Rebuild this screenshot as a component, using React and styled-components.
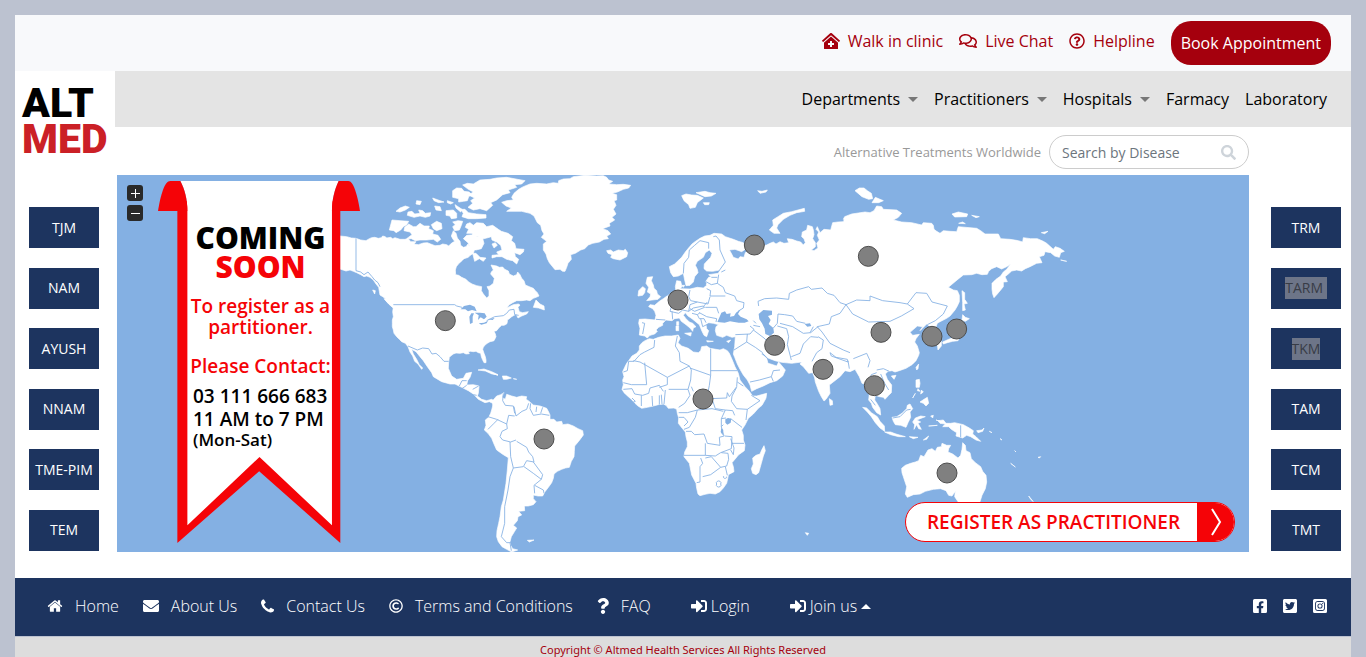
import React from "react";
import styled, { createGlobalStyle } from "styled-components";
import {
  FaClinicMedical,
  FaRegComments,
  FaRegQuestionCircle,
  FaSearch,
  FaEnvelope,
  FaRegCopyright,
  FaQuestion,
  FaSignInAlt,
  FaFacebookSquare,
  FaTwitterSquare,
  FaInstagramSquare,
} from "react-icons/fa";

const NAVY = "#1d345f";
const CRIMSON = "#a5000d";
const RED = "#f50307";
const SEA = "#84b0e3";

const GlobalStyle = createGlobalStyle`
  *, *::before, *::after { box-sizing: border-box; }
  body {
    margin: 0;
    background: #bcc2d0;
    font-family: "Open Sans", "Noto Sans", sans-serif;
    font-size: 16px;
    line-height: 24px;
    color: #000;
  }
  a { color: inherit; text-decoration: none; }
  button, input { font-family: inherit; }
`;

const Page = styled.div`
  margin: 15px 15px 0;
  background: #fff;
`;

const TopBar = styled.div`
  display: flex;
  justify-content: flex-end;
  align-items: center;
  gap: 16px;
  height: 56px;
  padding-right: 20px;
  background: #f8f9fb;
`;

const TopLink = styled.a`
  display: flex;
  align-items: center;
  gap: 8px;
  padding-bottom: 4px;
  color: ${CRIMSON};
  svg { width: ${(p) => p.$icon || 16}px; height: 16px; }
`;

const BookButton = styled.button`
  height: 44px;
  padding: 0 10px;
  border: 0;
  border-radius: 20px;
  background: ${CRIMSON};
  color: #fff;
  font-size: 16px;
`;

const Masthead = styled.header`
  display: grid;
  grid-template-columns: 100px 1fr;
`;

const LogoLink = styled.a`
  display: block;
  padding: 14px 7px 0;
  font-family: Roboto, sans-serif;
  font-weight: 900;
  font-size: 41px;
  line-height: 36px;
`;

const LogoLine = styled.span`
  display: block;
  color: ${(p) => (p.$red ? "#cb2026" : "#000")};
`;

const Nav = styled.nav`
  display: flex;
  justify-content: flex-end;
  align-items: center;
  gap: 16px;
  height: 56px;
  padding-right: 24px;
  background: #e4e4e4;
`;

const NavLink = styled.a`
  display: flex;
  align-items: center;
  gap: 8px;
`;

const Caret = styled.span`
  border: 5px solid transparent;
  border-bottom-width: 0;
  border-top-color: #777;
`;

const CaretUp = styled.span`
  border: 5px solid transparent;
  border-top-width: 0;
  border-bottom-color: #fff;
`;

const SearchRow = styled.form`
  display: flex;
  justify-content: flex-end;
  align-items: center;
  gap: 8px;
  height: 48px;
  padding: 2px 102px 0 0;
`;

const SearchLabel = styled.label`
  color: #999;
  font-size: 13px;
`;

const SearchBox = styled.div`
  display: flex;
  align-items: center;
  width: 200px;
  height: 34px;
  padding: 0 12px;
  border: 1px solid #ccc;
  border-radius: 17px;
  svg { color: #ced4da; flex: none; width: 15px; height: 15px; }
`;

const SearchInput = styled.input`
  flex: 1;
  min-width: 0;
  padding: 0;
  border: 0;
  outline: 0;
  background: none;
  font-size: 14px;
  color: #6c757d;
  &::placeholder { color: #6c757d; opacity: 1; }
`;

const Main = styled.main`
  display: grid;
  grid-template-columns: 102px 1fr 102px;
  margin-bottom: 26px;
`;

const SideColumn = styled.div`
  display: flex;
  flex-direction: column;
  justify-content: space-between;
  align-items: ${(p) => (p.$right ? "flex-end" : "flex-start")};
  padding: ${(p) => (p.$right ? "32px 10px 1px 0" : "32px 0 1px 14px")};
`;

const SideButton = styled.button`
  width: 70px;
  height: 41px;
  padding: 0;
  border: 0;
  background: ${NAVY};
  color: #fff;
  font-size: 14px;
  line-height: 22px;
  white-space: pre;
`;

const Marked = styled.span`
  display: inline-block;
  background: #6d7588;
  color: #383c46;
`;

const MapPanel = styled.section`
  position: relative;
  aspect-ratio: 1132 / 377;
  background: ${SEA};
  overflow: hidden;
`;

const MapSvg = styled.svg`
  display: block;
  width: 100%;
  height: 100%;
`;

const ZoomControls = styled.div`
  position: absolute;
  top: 10px;
  left: 10px;
  display: grid;
  gap: 4px;
`;

const ZoomButton = styled.button`
  width: 16px;
  height: 16px;
  padding: 0;
  border: 0;
  border-radius: 3px;
  background: #292929;
  svg { display: block; }
`;

const Ribbon = styled.aside`
  position: absolute;
  top: 6px;
  left: 41px;
  width: 202px;
  height: 362px;
`;

const RibbonShape = styled.svg`
  position: absolute;
  inset: 0;
  width: 100%;
  height: 100%;
`;

const RibbonText = styled.div`
  position: relative;
  padding: 42px 28px 0 31px;
  color: ${RED};
  font-size: 19px;
  font-weight: 600;
  line-height: 21px;
  text-align: center;
  white-space: nowrap;
`;

const RibbonTitle = styled.h2`
  margin: 0 0 15px;
  font-size: 30px;
  font-weight: 800;
  line-height: 29px;
  span { display: block; color: #000; }
`;

const RibbonNote = styled.p`
  margin: 0 0 18px;
`;

const RibbonContact = styled.p`
  margin: 0 0 8px;
`;

const RibbonHours = styled.p`
  margin: 0;
  padding-left: 4px;
  color: #000;
  font-size: 19px;
  line-height: 23px;
  text-align: left;
  small { display: block; font-size: 17px; line-height: 18px; }
`;

const RegisterLink = styled.a`
  position: absolute;
  right: 14px;
  bottom: 10px;
  display: flex;
  width: 330px;
  height: 40px;
  border: 1px solid ${RED};
  border-radius: 20px;
  overflow: hidden;
  background: #fff;
  color: ${RED};
  font-size: 19px;
  font-weight: 600;
  line-height: 38px;
  white-space: nowrap;
`;

const RegisterText = styled.span`
  flex: 1;
  padding-left: 4px;
  text-align: center;
`;

const RegisterArrow = styled.span`
  display: grid;
  place-items: center;
  width: 37px;
  background: ${RED};
`;

const FooterBar = styled.footer`
  display: flex;
  align-items: center;
  height: 58px;
  padding: 0 23px 2px 32px;
  background: ${NAVY};
  color: #fff;
  font-weight: 300;
`;

const FooterLinks = styled.nav`
  display: flex;
  gap: ${(p) => p.$gap}px;
  margin-right: 40px;
`;

const FooterLink = styled.a`
  display: flex;
  align-items: center;
  gap: ${(p) => (p.$tight ? 4 : 12)}px;
  svg { width: ${(p) => p.$icon || 16}px; height: 16px; }
`;

const Social = styled.div`
  display: flex;
  gap: 14px;
  margin-left: auto;
  svg { display: block; width: 16px; height: 16px; }
`;

const Copyright = styled.div`
  height: 21px;
  padding-top: 5px;
  border-top: 1px solid #bcc2d0;
  background: #ddd;
  color: ${CRIMSON};
  font-family: "Noto Sans", sans-serif;
  font-size: 11px;
  line-height: 15px;
  text-align: center;
`;

function HomeIcon() {
  return (
    <svg viewBox="0 0 1664 1792" fill="currentColor" aria-hidden="true">
      <path d="M1408 992v480q0 26-19 45t-45 19h-384v-384h-256v384h-384q-26 0-45-19t-19-45v-480q0-1 .5-3t.5-3l575-474 575 474q1 2 1 6zm223-69l-62 74q-8 9-21 11h-3q-13 0-21-7l-692-577-692 577q-12 8-24 7-13-2-21-11l-62-74q-8-10-7-23.5t11-21.5l719-599q32-26 76-26t76 26l244 204v-195q0-14 9-23t23-9h192q14 0 23 9t9 23v408l219 182q10 8 11 21.5t-7 23.5z" />
    </svg>
  );
}

function PhoneIcon() {
  return (
    <svg viewBox="0 0 1408 1408" fill="currentColor" aria-hidden="true">
      <path d="M1408 1112q0 27-10 70.5t-21 68.5q-21 50-122 106-94 51-186 51-27 0-53-3.5t-57.5-12.5-47-14.5-55.5-20.5-49-18q-98-35-175-83-127-79-264-216t-216-264q-48-77-83-175-3-9-18-49t-20.5-55.5-14.5-47-12.5-57.5-3.5-53q0-92 51-186 56-101 106-122 25-11 68.5-21t70.5-10q14 0 21 3 18 6 53 76 11 19 30 54t35 63.5 31 53.5q3 4 17.5 25t21.5 35.5 7 28.5q0 20-28.5 50t-62 55-62 53-28.5 46q0 9 5 22.5t8.5 20.5 14 24 11.5 19q76 137 174 235t235 174q2 1 19 11.5t24 14 20.5 8.5 22.5 5q18 0 46-28.5t53-62 55-62 50-28.5q14 0 28.5 7t35.5 21.5 25 17.5q25 15 53.5 31t63.5 35 54 30q70 35 76 53 3 7 3 21z" />
    </svg>
  );
}

/* Each sheet of the map has its own origin inside the 3396 x 1131 view box. */
const SHEETS = [
  {
    id: "north-america",
    x: 669,
    y: -15,
    land: [
      "M-20 196L0 198 20 200 34 204 48 205 62 210 78 212 88 206 95 203 104 202 115 205 124 203 128 198 136 200 140 204 152 202 158 206 165 203 180 208 194 208 205 206 212 215 228 215 222 222 235 224 250 219 262 218 272 222 285 227 300 226 308 222 320 224 326 228 334 220 344 214 338 206 334 198 340 182 348 190 352 204 360 214 362 226 370 232 378 230 384 222 390 232 398 234 404 238 400 250 388 258 385 262 372 266 366 272 355 282 349 290 346 300 347 314 356 316 365 322 378 328 385 335 396 342 410 347 425 350 424 362 430 372 440 384 447 378 447 362 441 350 450 348 460 340 463 325 452 312 454 306 460 300 453 285 470 288 478 292 488 291 494 298 505 303 508 312 520 318 530 314 533 306 540 314 545 325 552 332 556 345 570 351 580 355 586 362 592 368 597 378 588 382 580 385 570 392 560 390 545 392 530 392 518 398 508 404 500 414 508 410 520 404 535 402 540 405 534 412 538 425 548 428 565 425 560 432 545 438 534 444 530 436 530 432 522 436 515 440 508 446 502 450 502 456 500 462 492 466 485 466 476 474 470 482 462 484 466 492 468 500 462 512 456 514 450 515 442 520 435 525 430 532 428 538 432 550 436 560 438 570 438 578 432 578 427 568 424 560 422 550 415 548 408 544 400 545 392 544 385 545 388 551 378 552 370 548 360 550 348 549 340 552 332 558 328 562 326 576 325 595 335 618 350 628 370 625 378 610 395 607 390 622 383 632 380 645 400 644 417 648 415 670 412 678 425 688 440 692 455 688 462 692 458 700 448 695 435 698 415 688 400 672 385 662 365 652 345 642 330 642 305 635 280 620 275 608 262 590 250 572 240 560 228 545 215 538 220 552 230 568 238 584 248 594 245 598 234 582 224 574 218 558 210 546 204 530 196 520 185 515 178 508 170 500 162 490 160 480 157 470 157 460 157 450 160 440 158 425 160 412 152 406 145 400 138 393 135 385 128 380 120 375 118 364 116 352 108 342 100 330 90 322 80 318 72 320 62 314 50 308 40 304 30 300 18 303 0 297 -20 294Z",
      "M485 97L500 92 520 90 515 82 522 70 536 58 550 50 570 42 590 40 620 42 640 38 655 40 656 32 670 27 690 26 700 20 735 16 770 18 790 17 800 22 806 30 818 34 806 42 830 44 850 43 872 46 866 54 850 58 832 66 816 70 830 74 830 90 822 92 828 106 820 118 828 132 816 142 824 150 808 160 810 168 788 176 804 182 812 192 800 198 805 206 792 208 778 216 758 220 745 225 734 236 722 240 706 250 692 254 694 268 684 280 680 292 675 304 668 304 660 298 645 299 636 288 628 278 622 266 618 252 610 240 610 222 620 214 604 202 612 192 606 182 602 166 592 158 582 138 570 130 545 124 500 124 514 114 498 108Z",
      "M800 242L812 240 820 246 835 240 850 242 856 238 863 248 860 260 840 270 820 266 812 262 816 254 804 250Z",
      "M368 45L382 40 400 42 420 30 450 28 470 24 500 22 555 32 545 42 524 44 530 52 505 60 510 68 488 74 470 90 452 98 458 106 440 122 420 116 400 120 384 112 398 100 392 92 404 84 385 75 400 66 385 58Z",
      "M338 62L350 54 365 55 372 64 388 66 394 74 386 80 382 92 370 94 356 96 356 86 338 82Z",
      "M362 118L375 118 385 128 410 132 438 134 438 144 410 146 385 146 366 140 370 130Z",
      "M380 162L390 158 400 166 410 158 430 160 440 170 458 166 475 178 484 184 504 190 518 200 514 212 524 220 528 236 552 238 550 246 540 254 524 248 526 260 536 268 530 282 518 272 500 268 486 260 470 260 456 264 456 256 476 254 470 246 486 240 482 226 470 216 456 210 454 200 440 204 424 208 412 198 400 200 396 190 380 190 386 178 376 172Z",
      "M192 182L194 172 206 162 220 170 228 170 240 160 252 168 268 168 266 176 280 182 278 192 294 196 302 208 292 216 280 208 260 210 240 210 226 212 214 206 200 206 216 194 210 186Z",
      "M156 150L180 152 206 154 200 164 190 170 182 180 168 188 162 182 148 180Z",
      "M202 136L204 126 216 124 224 132 240 130 236 120 248 122 256 130 272 128 270 138 256 142 240 138 222 142Z",
      "M168 124L180 114 196 108 208 112 196 120 180 126Z",
      "M274 164L290 154 304 160 306 176 290 182 280 176Z",
      "M338 156L354 152 368 154 364 166 358 180 344 182 338 170 346 164Z",
      "M318 122L340 120 350 130 350 144 334 146 330 138 318 136Z",
      "M278 84L300 92 312 96 296 98 282 92Z",
      "M322 92L340 98 332 102 322 98Z",
      "M230 92L244 94 240 104 228 102Z",
      "M284 108L300 110 304 122 288 120Z",
      "M345 104L366 118 362 126 348 114Z",
      "M398 250L408 250 420 262 438 264 430 274 418 266 404 274Z",
      "M380 196L400 194 428 206 432 220 424 236 408 240 392 236 384 218 370 206Z",
      "M456 222L466 218 472 226 462 234Z",
      "M580 412L588 390 600 402 612 408 613 420 596 414Z",
      "M98 360L106 362 104 372Z",
      "M132 386L150 394 166 410 162 416 146 402Z",
      "M414 600L432 597 455 605 474 614 456 612 436 603Z",
      "M487 618L500 618 514 624 500 628 490 628Z",
    ],
    water: [
      "M362 418L372 408 390 404 404 410 410 424 396 420 384 424 376 418Z",
      "M388 440L394 430 402 430 398 440 398 458 390 462Z",
      "M404 428L420 428 434 430 440 440 432 448 422 442 414 450 416 436Z",
      "M416 460L432 458 444 452 440 460 424 464Z",
      "M442 448L464 444 458 450Z",
    ],
    lines: [
      "M48 205V302L62 306 72 314 84 306 96 320 104 330 114 338 120 350",
      "M160 404H344L350 408 366 412",
      "M440 452L452 446 464 440 490 437 500 430 508 420 522 418 524 434 536 436",
      "M204 528L232 540 248 534 266 536 276 552 288 550 300 560 312 574 326 574",
    ],
  },
  {
    id: "south-america",
    x: 669,
    y: 555,
    land: [
      "M458 122L470 108 482 104 492 98 486 112 496 118 500 103 515 108 530 112 545 108 560 110 558 118 565 122 572 128 580 135 600 138 620 145 626 156 630 165 630 178 642 178 650 186 665 184 668 194 684 192 700 198 714 206 728 212 730 225 722 236 715 245 704 258 703 275 702 290 694 304 688 322 676 324 665 328 652 334 642 342 640 355 635 368 628 378 615 395 608 408 594 408 580 405 580 416 588 425 580 434 565 438 553 438 554 452 536 454 545 465 534 470 532 482 520 496 530 504 524 514 514 530 510 545 512 556 518 566 533 570 515 576 500 568 486 560 475 545 470 530 471 512 476 490 480 470 484 440 490 420 498 370 502 330 505 293 490 284 470 270 462 252 455 235 444 220 433 210 438 196 436 180 446 172 452 160 455 150 458 138Z",
      "M562 541L582 540 568 546Z",
      "M450 37L462 42 474 46Z",
      "M520 56L530 58Z",
    ],
    lines: [
      "M490 100L488 122 496 136 520 138 524 160",
      "M522 140L528 168 546 154 560 148 566 130",
      "M572 130L570 146 580 166 604 162 628 166",
      "M590 140L588 156M608 142L602 160",
      "M444 170L470 178 500 192 506 166 524 168",
      "M444 208L462 190 474 178",
      "M500 192L502 206 486 214 480 230 488 240 512 246 528 240",
      "M510 246L512 290 520 324 550 320 560 302 582 306 578 290 566 276 560 262 530 244",
      "M552 320L580 340 604 358 608 344 580 306",
      "M604 358L582 376 584 400M584 376L610 390 612 400",
      "M520 324L510 350 504 390 494 440 494 490 484 530 500 548 516 548",
      "M510 548L514 572",
      "M358 78L366 62H380M380 76L366 86M398 88L416 78M410 106L400 104",
    ],
  },
  {
    id: "eurasia",
    x: 1479,
    y: -15,
    land: [
      "M270 205L284 198 300 196 312 190 335 192 346 200 370 208 385 214 400 218 410 235 395 245 375 238 358 240 364 250 370 262 385 267 390 260 402 262 406 248 430 232 470 225 480 220 490 216 498 222 510 215 522 220 536 218 532 206 546 208 560 213 572 216 580 225 586 218 582 206 575 200 577 186 590 180 593 166 607 170 610 180 612 194 608 206 616 218 616 230 604 240 612 242 624 234 620 220 628 210 622 196 626 186 618 178 622 170 630 188 642 178 662 180 668 158 684 156 700 155 706 142 720 138 716 148 700 148 704 140 725 132 765 126 780 128 792 122 800 108 815 110 820 118 860 120 875 130 865 142 850 150 875 156 905 158 935 165 940 158 965 160 970 166 972 178 980 184 990 190 1000 182 1020 184 1040 185 1045 170 1100 175 1112 182 1125 192 1165 192 1172 206 1200 208 1225 212 1238 216 1240 203 1262 206 1282 206 1300 214 1310 220 1330 238 1336 230 1350 235 1363 244 1352 248 1348 262 1334 258 1322 248 1305 245 1302 256 1288 260 1296 278 1280 280 1260 290 1246 296 1235 303 1220 300 1205 303 1195 312 1185 320 1192 335 1180 336 1180 350 1172 360 1162 372 1152 383 1148 372 1146 358 1146 340 1158 328 1172 318 1180 306 1190 298 1202 282 1190 290 1175 297 1160 290 1145 296 1136 304 1132 313 1116 314 1100 310 1085 314 1060 315 1046 326 1035 335 1015 352 1030 360 1042 362 1048 376 1048 395 1042 408 1035 420 1020 438 1010 445 990 455 982 460 976 475 992 500 985 512 970 515 960 495 960 470 950 462 930 482 938 470 922 468 900 487 908 496 928 493 918 506 914 516 922 528 928 548 926 556 918 572 906 584 888 595 868 602 855 606 846 602 834 604 826 612 832 628 845 645 844 668 836 676 825 688 820 682 808 680 796 676 794 690 802 702 810 716 812 735 800 728 788 712 784 700 776 690 778 672 766 642 756 640 748 620 735 598 720 605 705 602 690 620 658 645 660 670 648 688 642 693 634 680 626 664 616 636 614 624 608 608 596 610 580 590 570 582 575 576 545 580 515 577 495 572 474 564 458 548 454 552 470 565 474 580 482 582 500 588 506 576 516 588 526 600 518 618 500 632 480 638 460 648 440 656 425 664 420 645 412 630 400 615 390 598 382 582 374 562 370 552 374 530 376 500 366 502 350 496 338 502 320 496 316 482 318 470 326 464 310 460 296 458 288 464 290 476 296 482 290 500 282 496 276 484 272 474 268 464 258 456 246 446 234 438 226 428 220 436 228 446 238 456 248 460 258 470 250 474 248 484 240 474 228 464 214 454 208 444 194 446 186 452 168 450 158 460 158 466 146 472 138 480 142 484 134 492 120 496 112 504 104 498 88 495 90 475 86 460 88 448 105 447 135 450 138 436 134 424 128 416 116 410 120 404 134 406 148 394 160 386 174 376 192 368 198 364 196 350 200 332 212 334 216 350 210 356 240 357 262 352 280 354 290 346 286 336 296 322 304 320 296 314 325 310 330 300 308 304 290 303 282 296 283 282 292 272 302 262 306 250 298 240 286 248 280 262 262 274 256 286 262 298 264 308 254 320 250 336 240 346 228 347 224 330 220 310 205 318 190 320 182 308 178 290 194 282 215 262 226 246 235 235 246 222 255 215Z",
      "M112 322L128 320 124 332 130 345 132 355 140 362 142 372 152 380 144 388 126 390 110 392 120 380 122 372 112 366 116 352 108 340Z",
      "M86 362L98 350 106 356 104 368 98 376 84 378Z",
      "M215 77L228 72 245 75 262 76 280 84 262 98 256 112 240 115 236 104 222 92Z",
      "M258 68L285 64 300 68 318 70 304 78 285 80Z",
      "M280 98L298 98 296 104 284 104Z",
      "M478 180L490 166 488 150 504 140 520 130 545 125 583 115 584 124 560 128 540 136 520 148 504 164 500 174 510 190 492 190Z",
      "M443 62L456 64 472 60 468 66 450 70Z",
      "M200 455H206V466H200ZM198 468H206V482H198ZM224 490L244 488 242 498ZM290 512L310 514 292 516ZM350 514L362 510 356 518Z",
      "M216 346L224 346 220 352Z",
      "M735 62L748 54 762 54 772 62 784 70 788 86 776 88 756 80Z",
      "M786 98L796 82 820 92 806 98Z",
      "M1026 132L1045 126 1073 132 1070 140 1034 141Z",
      "M1085 136L1108 140 1098 143ZM1046 160L1058 156 1066 161ZM1294 188L1314 184 1304 191ZM1352 270L1370 274Z",
      "M1056 362L1064 368 1064 388 1072 400 1062 402 1066 420 1058 422 1058 398Z",
      "M1058 434L1066 442 1078 446 1066 454 1056 450Z",
      "M1060 454L1062 480 1044 512 1028 514 1012 518 1000 522 998 516 1016 508 1036 500 1044 484Z",
      "M982 522L994 514 994 528 984 540Z",
    ],
    water: [
      "M322 456L330 438 334 428 345 424 350 432 362 430 360 440 372 438 378 428 392 418 384 432 392 440 410 448 416 454 404 458 386 458 360 454 344 458Z",
      "M446 432L460 420 486 422 486 434 474 438 482 450 476 462 490 474 492 488 480 498 466 492 464 476 456 460 448 448Z",
      "M584 462L600 460 604 468 592 470Z",
      "M278 352L290 340 284 334 274 346Z",
    ],
    lines: [
      "M220 310L222 280 236 262 238 240 254 226 270 212 296 218 296 236",
      "M310 200L318 198 328 210 330 240 346 276 326 304",
      "M326 314L322 340 340 352 346 368 374 378 380 392 402 398 400 414 384 424",
      "M286 334L304 344 322 340M290 356L302 362 300 378 346 378",
      "M240 360L236 380 242 392 262 396 294 402 300 380",
      "M174 376L186 404 180 424 206 430 218 420 236 424 240 404 262 396",
      "M236 424L250 414 280 408 284 412 254 424 240 416M280 410L292 396M286 412L320 412 326 430",
      "M246 430L262 434 268 446 282 446 288 458M268 428L290 440 320 446 318 456M262 434L270 428M272 446L278 470 294 462",
      "M138 448L166 450M96 458L104 460 98 492M186 404L176 396M186 424L188 448",
      "M446 408L444 394 464 386 500 384 536 388 538 370 560 360 596 350 604 358 636 354 652 370 672 376 690 398 708 404",
      "M708 404L690 430 664 440 658 462 622 470 636 486 660 520 700 540 720 548",
      "M490 474L502 460 504 432 524 434 548 438 560 454 586 460",
      "M510 460L548 470 580 490 602 488 624 470M502 468L530 476 536 500 532 524 544 570",
      "M544 560L570 550 580 522 602 500 624 502M600 488L610 470M606 574L620 548 636 536 640 510 624 500",
      "M708 404L740 390 780 392 780 378 818 392 870 398 892 402 918 368 950 370 966 396 1012 408 1000 432 976 452 952 464",
      "M708 404L728 432 776 456 840 454 874 438 912 416 892 402",
      "M376 494L420 492 432 478 420 468M412 492L410 516 372 540M410 516L436 532 458 548M430 480L462 504 474 516M430 466L450 470",
      "M420 636L448 630 484 620 490 602 510 600M484 620L490 634",
      "M660 548L678 562 712 568 714 576 664 558Z",
      "M714 572L718 596M730 566L770 550 780 572 774 592M800 608L784 614 776 640M800 600L820 596 838 604M812 612L824 640 836 660",
      "M346 300L334 306M430 452L438 460M304 322L322 322",
    ],
  },
  {
    id: "africa",
    x: 1479,
    y: 465,
    land: [
      "M105 32L118 26 130 28 146 22 165 18 185 18 205 15 210 25 204 38 215 48 235 55 250 66 265 68 272 62 275 50 290 48 300 55 330 60 340 56 352 62 358 70 366 88 375 110 385 130 390 150 405 170 418 184 428 198 440 198 470 190 468 204 465 210 456 226 445 235 430 252 415 265 405 285 395 300 400 316 400 330 405 345 403 362 385 375 378 384 366 398 370 410 372 425 355 434 354 442 350 460 340 474 330 485 316 492 300 490 285 493 270 497 264 492 260 475 258 460 245 435 242 420 238 400 230 390 222 380 224 366 232 350 232 336 228 320 226 306 216 294 205 280 206 264 202 250 200 238 192 234 175 235 168 226 160 222 145 224 130 228 112 232 95 235 84 228 75 220 64 208 55 200 42 188 36 178 40 164 38 150 42 140 38 125 44 112 50 100 56 92 66 78 80 70 88 60 88 48 96 38Z",
      "M462 347L466 362 460 378 454 400 446 428 438 434 428 430 424 416 430 402 428 384 438 376 450 372 456 358Z",
    ],
    water: ["M346 268L354 264 364 266 362 278 352 284 346 278Z", "M334 294L340 300 338 316 332 306Z"],
    lines: [
      "M134 30L132 52 104 66 90 74 72 94 56 94 52 122 40 126",
      "M70 92L90 96 172 142 238 108 210 94 208 68 196 48 202 18",
      "M104 98L110 164 64 164 40 158M172 142L172 164 148 172",
      "M238 108L244 120 242 150 234 178 176 178M240 114L302 136V56M302 122H382",
      "M302 136L298 166 294 186 300 206 350 204 352 188 358 200 380 170 382 142",
      "M382 156L400 168M380 172L366 198 364 214 380 236 412 238 450 212 424 196",
      "M412 238L408 270M346 240L368 242 374 256",
      "M40 178L66 176 74 192 98 196 116 190 120 174 148 166 160 184",
      "M66 204L76 214 62 220M94 196L94 228M126 198L128 228M148 196L148 224M154 194L156 222M166 180L162 222",
      "M234 178L240 196 224 220 206 232M244 170L250 184M206 248H232L262 240 306 236 340 244",
      "M262 240L256 262 238 292 222 298M206 262L222 262 234 276 222 288",
      "M306 206L316 236 346 240 334 266 334 290 342 318 328 322 330 346 292 340 282 312 254 314 244 304 228 304",
      "M286 340V376L222 376M286 376L316 378 332 368 364 356 366 320 344 318",
      "M366 340L402 340M362 326L372 354 370 374 362 360",
      "M272 384L278 400 270 410 270 456 260 458M278 440L302 434 332 412 304 380 286 384",
      "M332 412L350 408 356 388 354 370 334 368M346 410L352 436M320 462A7 6 0 1 0 332 462 7 6 0 1 0 320 462",
      "M342 438A5 4 0 1 0 350 440",
      "M334 266L348 264M362 266L396 292M340 284L334 290",
    ],
  },
  {
    id: "oceania",
    x: 2049,
    y: 465,
    land: [
      "M188 232L200 234 214 248 232 260 240 274 253 288 254 304 240 294 226 278 214 260 202 246Z",
      "M254 306L272 306 288 312 316 320 296 320 272 314Z",
      "M276 262L290 260 306 250 320 236 322 226 330 222 338 236 330 246 332 262 324 278 318 292 302 286 286 284 280 274Z",
      "M342 298L344 284 338 276 346 264 362 258 376 260 360 266 350 270 362 276 354 280 364 298 356 296 350 284Z",
      "M414 272L430 270 438 280 452 280 464 278 490 284 508 294 520 302 518 312 528 320 542 334 528 330 512 320 500 316 488 324 468 318 470 308 454 298 446 290 428 290 436 282 420 280Z",
      "M530 302L546 300 552 294 548 304 534 308Z",
      "M348 150L358 148 360 160 358 172 348 172Z",
      "M360 216L372 208 382 202 386 220 378 228 370 220ZM364 180L370 186 362 192ZM346 190L338 204ZM354 176L360 184 352 182Z",
      "M348 112L356 102 354 116 350 120ZM274 138L288 136 282 148Z",
      "M88 206L97 212 98 224 90 226Z",
      "M305 415L316 406 332 400 346 396 356 392 362 376 372 380 384 360 396 356 406 364 412 352 424 350 426 340 440 346 452 346 446 356 444 366 458 372 474 384 482 376 486 358 488 338 496 346 498 362 510 368 514 386 526 398 542 410 548 424 558 436 560 456 556 476 546 496 540 515 530 540 480 540 474 515 464 500 466 484 456 498 446 496 438 482 422 476 400 478 376 484 360 492 340 494 322 502 316 492 320 470 310 440 306 428Z",
      "M392 258L400 256 398 264ZM328 320L354 322 340 326ZM370 330L386 318 380 328ZM386 288L412 286ZM408 270L420 274Z",
      "M568 304L576 308ZM632 400L646 411ZM714 382L722 380 718 384ZM644 362L648 366ZM600 326L606 330ZM686 498L700 515 692 508ZM16 608L26 610 22 616Z",
    ],
    lines: ["M482 286V322", "M278 264L300 260 320 240 332 238", "M212 208L226 226"],
  },
];

/* Clinic markers, in whole-map coordinates. */
const MARKERS = [
  [985, 437], [1281, 792], [1683, 375], [1758, 672], [1912, 210], [1973, 511], [2118, 583],
  [2254, 244], [2292, 472], [2272, 632], [2445, 484], [2519, 462], [2490, 894],
];

function WorldMap() {
  return (
    <MapSvg viewBox="0 0 3396 1131" preserveAspectRatio="xMidYMid slice" role="img" aria-label="World map">
      {SHEETS.map((s) => (
        <g key={s.id} transform={`translate(${s.x} ${s.y})`}>
          <path d={s.land.join("")} fill="#fff" stroke="#fff" strokeWidth="2" strokeLinejoin="round" />
          {s.water && <path d={s.water.join("")} fill={SEA} />}
          <path d={s.lines.join("")} fill="none" stroke={SEA} strokeWidth="2.6" strokeLinejoin="round" />
        </g>
      ))}
      {MARKERS.map(([x, y]) => (
        <circle key={`${x}-${y}`} cx={x} cy={y} r="30" fill="#808080" stroke="#4d4d4d" strokeWidth="3" />
      ))}
    </MapSvg>
  );
}

function ComingSoon() {
  return (
    <Ribbon>
      <RibbonShape viewBox="0 0 605 1085" preserveAspectRatio="none" aria-hidden="true">
        <path d="M58 60V1085L303 870L546 1085V60Z" fill={RED} />
        <path d="M67 0C80 25 88 55 88 90V1032L304 827L521 1032V90C521 55 530 25 541 0Z" fill="#fff" />
        <path d="M0 90C8 40 20 0 37 0H67C80 25 88 55 88 90Z" fill={RED} />
        <path d="M605 90C597 40 585 0 570 0H541C529 25 521 55 521 90Z" fill={RED} />
      </RibbonShape>
      <RibbonText>
        <RibbonTitle><span>COMING</span>SOON</RibbonTitle>
        <RibbonNote>To register as a<br />partitioner.</RibbonNote>
        <RibbonContact>Please Contact:</RibbonContact>
        <RibbonHours>03 111 666 683<br />11 AM to 7 PM<small>(Mon-Sat)</small></RibbonHours>
      </RibbonText>
    </Ribbon>
  );
}

const LEFT = ["TJM", "NAM", "AYUSH", "NNAM", "TME-PIM", "TEM"];
const RIGHT = ["TRM", "TARM ", "TKM", "TAM", "TCM", "TMT"];
const SELECTED = ["TARM ", "TKM"];

const MENU = [
  ["Departments", true],
  ["Practitioners", true],
  ["Hospitals", true],
  ["Farmacy", false],
  ["Laboratory", false],
];

export default function App() {
  return (
    <>
      <GlobalStyle />
      <Page>
        <TopBar>
          <TopLink href="#clinic" $icon={18}><FaClinicMedical />Walk in clinic</TopLink>
          <TopLink href="#chat" $icon={18}><FaRegComments />Live Chat</TopLink>
          <TopLink href="#help"><FaRegQuestionCircle />Helpline</TopLink>
          <BookButton type="button">Book Appointment</BookButton>
        </TopBar>
        <Masthead>
          <LogoLink href="#top">
            <LogoLine>ALT</LogoLine>
            <LogoLine $red>MED</LogoLine>
          </LogoLink>
          <div>
            <Nav>
              {MENU.map(([label, drop]) => (
                <NavLink key={label} href={`#${label}`}>{label}{drop && <Caret />}</NavLink>
              ))}
            </Nav>
            <SearchRow>
              <SearchLabel htmlFor="disease">Alternative Treatments Worldwide</SearchLabel>
              <SearchBox>
                <SearchInput id="disease" type="text" placeholder="Search by Disease" />
                <FaSearch />
              </SearchBox>
            </SearchRow>
          </div>
        </Masthead>
        <Main>
          <SideColumn>
            {LEFT.map((t) => <SideButton type="button" key={t}>{t}</SideButton>)}
          </SideColumn>
          <MapPanel>
            <WorldMap />
            <ZoomControls>
              <ZoomButton type="button" aria-label="Zoom in">
                <svg width="16" height="16"><path d="M4 8.5H13M8.5 4V13" stroke="#fff" /></svg>
              </ZoomButton>
              <ZoomButton type="button" aria-label="Zoom out">
                <svg width="16" height="16"><path d="M4 8.5H13" stroke="#fff" /></svg>
              </ZoomButton>
            </ZoomControls>
            <ComingSoon />
            <RegisterLink href="#register">
              <RegisterText>REGISTER AS PRACTITIONER</RegisterText>
              <RegisterArrow>
                <svg width="12" height="30" viewBox="0 0 12 30"><path d="M2 2L10 15L2 28" fill="none" stroke="#fff" strokeWidth="2" /></svg>
              </RegisterArrow>
            </RegisterLink>
          </MapPanel>
          <SideColumn $right>
            {RIGHT.map((t) => (
              <SideButton type="button" key={t}>{SELECTED.includes(t) ? <Marked>{t}</Marked> : t}</SideButton>
            ))}
          </SideColumn>
        </Main>
        <FooterBar>
          <FooterLinks $gap={24}>
            <FooterLink href="#home"><HomeIcon />Home</FooterLink>
            <FooterLink href="#about"><FaEnvelope />About Us</FooterLink>
            <FooterLink href="#contact" $icon={13}><PhoneIcon />Contact Us</FooterLink>
            <FooterLink href="#terms" $icon={14}><FaRegCopyright />Terms and Conditions</FooterLink>
            <FooterLink href="#faq" $icon={12}><FaQuestion />FAQ</FooterLink>
          </FooterLinks>
          <FooterLinks $gap={40}>
            <FooterLink href="#login" $tight><FaSignInAlt />Login</FooterLink>
            <FooterLink href="#join" $tight><FaSignInAlt />Join us<CaretUp /></FooterLink>
          </FooterLinks>
          <Social>
            <a href="#facebook" aria-label="Facebook"><FaFacebookSquare /></a>
            <a href="#twitter" aria-label="Twitter"><FaTwitterSquare /></a>
            <a href="#instagram" aria-label="Instagram"><FaInstagramSquare /></a>
          </Social>
        </FooterBar>
        <Copyright>Copyright © Altmed Health Services All Rights Reserved</Copyright>
      </Page>
    </>
  );
}
